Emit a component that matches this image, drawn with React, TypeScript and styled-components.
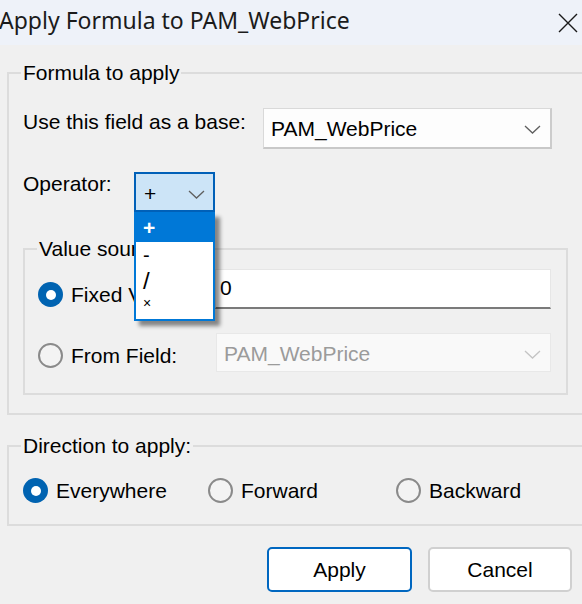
import { FC } from "react";
import styled, { createGlobalStyle, css } from "styled-components";

const GlobalStyle = createGlobalStyle`
  html, body {
    margin: 0;
    padding: 0;
    background: #f0f0f0;
  }
  * {
    box-sizing: border-box;
  }
`;

const Chevron: FC<{ color?: string }> = ({ color = "#5f5f5f" }) => (
  <svg width="17" height="9" viewBox="0 0 17 9">
    <path d="M1 1 L8.5 8 L16 1" fill="none" stroke={color} strokeWidth="1.3" />
  </svg>
);

interface RadioProps {
  checked?: boolean;
  label: string;
  width?: number;
  top?: number;
}

const RadioOption: FC<RadioProps> = ({ checked, label, width, top = 0 }) => (
  <Option $width={width} $top={top}>
    <RadioDot $checked={!!checked} />
    <Text>{label}</Text>
  </Option>
);

const App: FC = () => {
  return (
    <Window>
      <GlobalStyle />
      <TitleBar>
        <Title>Apply Formula to PAM_WebPrice</Title>
        <svg width="20" height="20" viewBox="0 0 20 20">
          <path d="M1 1 L19 19 M19 1 L1 19" stroke="#1a1a1a" strokeWidth="1.4" />
        </svg>
      </TitleBar>

      <Content>
        <GroupBox $width={590} $padBottom={18}>
          <Legend>Formula to apply</Legend>

          <Row $top={25}>
            <Label $width={240} $top={4}>
              Use this field as a base:
            </Label>
            <Combo $width={289} $height={41}>
              <span>PAM_WebPrice</span>
              <Chevron />
            </Combo>
          </Row>

          <Row $top={23}>
            <Label $width={111} $top={2}>
              Operator:
            </Label>
            <ComboWrap>
              <Combo $width={81} $height={40} $focused>
                <span>+</span>
                <Chevron />
              </Combo>
              <DropList>
                <DropItem $height={28} $size={21} $selected>
                  +
                </DropItem>
                <DropItem $height={26} $size={20}>
                  -
                </DropItem>
                <DropItem $height={26} $size={24}>
                  /
                </DropItem>
                <DropItem $height={18} $size={14}>
                  ×
                </DropItem>
              </DropList>
            </ComboWrap>
          </Row>

          <GroupBox $width={545} $padBottom={21} $top={27} $left={14}>
            <Legend>Value source</Legend>
            <Row $top={10} $left={13}>
              <RadioOption checked label="Fixed Value:" width={177} top={13} />
              <TextInput>0</TextInput>
            </Row>
            <Row $top={24} $left={13}>
              <RadioOption label="From Field:" width={178} top={10} />
              <Combo $width={335} $height={39} $disabled>
                <span>PAM_WebPrice</span>
                <Chevron color="#c4c4c4" />
              </Combo>
            </Row>
          </GroupBox>
        </GroupBox>

        <GroupBox $width={590} $padBottom={21} $top={21}>
          <Legend>Direction to apply:</Legend>
          <Row $top={22}>
            <RadioOption checked label="Everywhere" width={185} />
            <RadioOption label="Forward" width={188} />
            <RadioOption label="Backward" />
          </Row>
        </GroupBox>

        <ButtonRow>
          <Button $default>Apply</Button>
          <Button>Cancel</Button>
        </ButtonRow>
      </Content>
    </Window>
  );
};

const Window = styled.div`
  width: 582px;
  height: 604px;
  overflow: hidden;
  background: #f0f0f0;
  color: #000;
  font-family: "Liberation Sans", Arial, sans-serif;
  font-size: 21px;
`;

const TitleBar = styled.div`
  height: 45px;
  background: #eef2f9;
  display: flex;
  align-items: center;
  justify-content: space-between;
  padding: 0 4px 0 0;
`;

const Title = styled.div`
  font-family: "Noto Sans", "Open Sans", sans-serif;
  font-size: 23px;
  line-height: 45px;
  color: #1b1b1b;
  margin-left: -1px;
  margin-top: -4px;
`;

const Content = styled.div`
  padding: 18px 0 0 7px;
`;

const GroupBox = styled.fieldset<{
  $width: number;
  $padBottom: number;
  $top?: number;
  $left?: number;
}>`
  margin: ${(p) => `${p.$top ?? 0}px 0 0 ${p.$left ?? 0}px`};
  width: ${(p) => p.$width}px;
  min-width: 0;
  padding: 0 0 ${(p) => p.$padBottom}px 0;
  border: 2px solid #dcdcdc;
`;

const Legend = styled.legend`
  margin-left: 12px;
  padding: 0 2px;
  line-height: 20px;
  font-size: 21px;
`;

const Row = styled.div<{ $top: number; $left?: number }>`
  display: flex;
  align-items: flex-start;
  margin-top: ${(p) => p.$top}px;
  padding-left: ${(p) => p.$left ?? 14}px;
`;

const Label = styled.div<{ $width: number; $top: number }>`
  width: ${(p) => p.$width}px;
  margin-top: ${(p) => p.$top}px;
  line-height: 20px;
  white-space: nowrap;
`;

const Text = styled.span`
  line-height: 20px;
  white-space: nowrap;
`;

const ComboWrap = styled.div`
  position: relative;
`;

const Combo = styled.div<{
  $width: number;
  $height: number;
  $focused?: boolean;
  $disabled?: boolean;
}>`
  width: ${(p) => p.$width}px;
  height: ${(p) => p.$height}px;
  display: flex;
  align-items: center;
  justify-content: space-between;
  padding: 2px 9px 0 7px;
  background: #fdfdfd;
  border: 1px solid #d9d9d9;
  border-right: 2px solid #cccccc;
  border-bottom: 2px solid #c8c8c8;
  white-space: nowrap;

  ${(p) =>
    p.$focused &&
    css`
      background: #cce4f7;
      border: 2px solid #0060b8;
      padding: 4px 8px 0 8px;
    `}

  ${(p) =>
    p.$disabled &&
    css`
      background: #f9f9f9;
      color: #9b9b9b;
      border: 1px solid #e8e8e8;
      padding: 3px 9px 0 7px;
    `}
`;

const DropList = styled.div`
  position: absolute;
  top: 100%;
  left: 0;
  width: 81px;
  height: 109px;
  background: #ffffff;
  border: 2px solid #0078d7;
  box-shadow: 5px 5px 4px rgba(0, 0, 0, 0.45);
  z-index: 10;
`;

const DropItem = styled.div<{ $height: number; $size: number; $selected?: boolean }>`
  height: ${(p) => p.$height}px;
  line-height: ${(p) => p.$height}px;
  padding-left: 7px;
  font-size: ${(p) => p.$size}px;
  background: ${(p) => (p.$selected ? "#0078d7" : "transparent")};
  color: ${(p) => (p.$selected ? "#ffffff" : "#000000")};
  font-weight: ${(p) => (p.$selected ? 700 : 400)};
`;

const Option = styled.div<{ $width?: number; $top: number }>`
  display: flex;
  align-items: center;
  gap: 8px;
  height: 25px;
  margin-top: ${(p) => p.$top}px;
  width: ${(p) => (p.$width ? `${p.$width}px` : "auto")};
  flex-shrink: 0;
`;

const RadioDot = styled.span<{ $checked: boolean }>`
  width: 25px;
  height: 25px;
  border-radius: 50%;
  flex-shrink: 0;
  display: flex;
  align-items: center;
  justify-content: center;
  ${(p) =>
    p.$checked
      ? css`
          background: #0063b1;
          &::after {
            content: "";
            width: 10px;
            height: 10px;
            border-radius: 50%;
            background: #ffffff;
          }
        `
      : css`
          background: #f3f3f3;
          border: 2px solid #8a8a8a;
        `}
`;

const TextInput = styled.div`
  width: 336px;
  height: 40px;
  background: #ffffff;
  border: 1px solid #e6e6e6;
  border-bottom: 2px solid #7a7a7a;
  padding: 0 0 0 4px;
  line-height: 36px;
`;

const ButtonRow = styled.div`
  display: flex;
  justify-content: flex-end;
  gap: 16px;
  margin-top: 21px;
  padding-right: 10px;
`;

const Button = styled.button<{ $default?: boolean }>`
  width: ${(p) => (p.$default ? 145 : 144)}px;
  height: 45px;
  background: #ffffff;
  border: 2px solid ${(p) => (p.$default ? "#0067c0" : "#d0d0d0")};
  border-radius: 5px;
  font-family: "Liberation Sans", Arial, sans-serif;
  font-size: 21px;
  color: #000;
  padding: 0;
`;

export default App;
